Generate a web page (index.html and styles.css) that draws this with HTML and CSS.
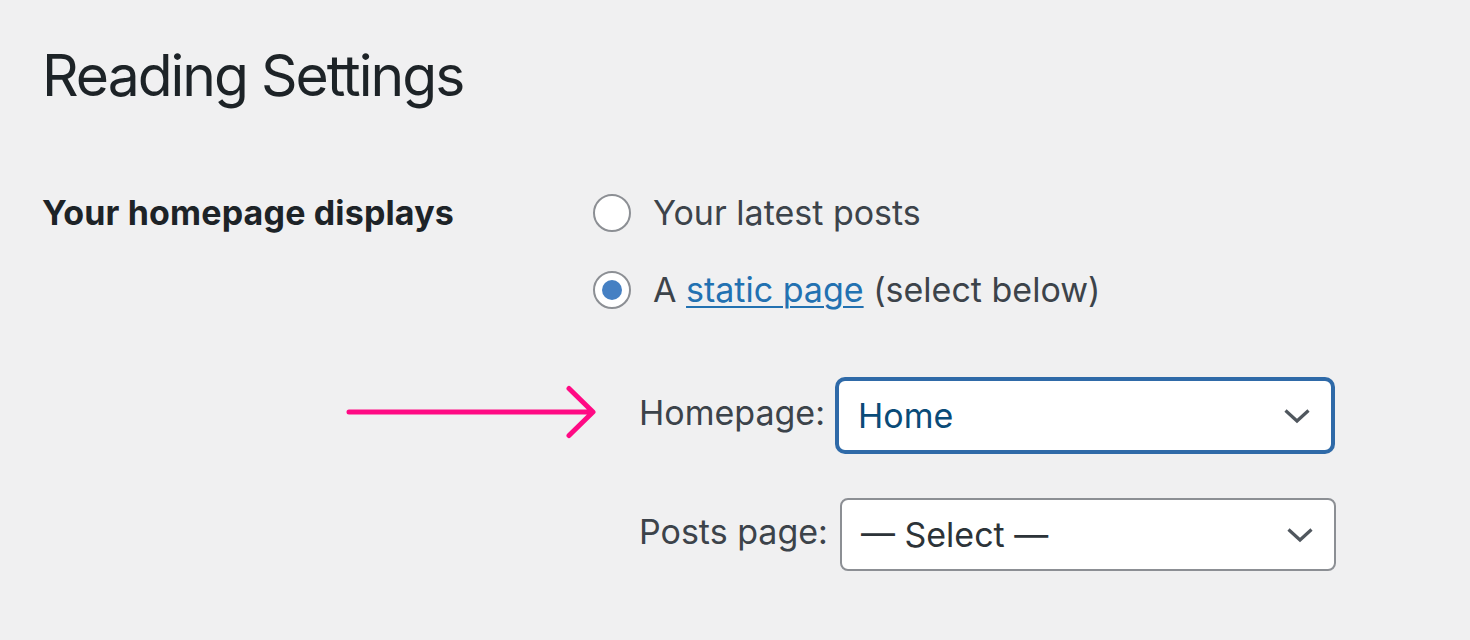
FILE: index.html
```html
<!DOCTYPE html>
<html lang="en">
<head>
<meta charset="utf-8">
<title>Reading Settings</title>
<link rel="stylesheet" href="styles.css">
</head>
<body>
<div class="wrap">
  <h1 class="title">Reading Settings</h1>
  <div class="form-row">
    <div class="th">Your homepage displays</div>
    <div class="td">
      <label class="radio-row">
        <span class="radio"></span>
        <span class="radio-text">Your latest posts</span>
      </label>
      <label class="radio-row">
        <span class="radio checked"></span>
        <span class="radio-text">A <a class="link" href="#">static page</a> (select below)</span>
      </label>
      <div class="pages">
        <div class="select-row">
          <span class="select-label">Homepage:</span>
          <div class="select focused">
            <span class="select-value home">Home</span>
            <svg class="chev" width="28" height="16" viewBox="0 0 28 16"><path d="M2.5 2.5 L14 13 L25.5 2.5" fill="none" stroke="#50575e" stroke-width="3.2"/></svg>
          </div>
        </div>
        <div class="select-row second">
          <span class="select-label">Posts page:</span>
          <div class="select">
            <span class="select-value">— Select —</span>
            <svg class="chev" width="28" height="16" viewBox="0 0 28 16"><path d="M2.5 2.5 L14 13 L25.5 2.5" fill="none" stroke="#50575e" stroke-width="3.2"/></svg>
          </div>
        </div>
      </div>
    </div>
  </div>
  <svg class="arrow" width="260" height="60" viewBox="0 0 260 60"><path d="M3 28 H246 M223 4.5 L247 28 L223 51.5" fill="none" stroke="#ff0a84" stroke-width="5" stroke-linecap="round" stroke-linejoin="round"/></svg>
</div>
</body>
</html>
```

FILE: styles.css
```css
html, body {
  margin: 0;
  padding: 0;
  background: #f0f0f1;
}
body {
  font-family: Inter, "Noto Sans", "Liberation Sans", sans-serif;
  color: #3c434a;
  width: 1470px;
  height: 640px;
  overflow: hidden;
}
.wrap {
  position: relative;
  padding: 47px 0 0 42px;
}
.title {
  margin: 0;
  font-size: 57px;
  line-height: 57px;
  font-weight: 400;
  color: #1d2327;
  letter-spacing: -2px;
}
.form-row {
  display: grid;
  grid-template-columns: 551px 1fr;
  margin-top: 90px;
}
.th {
  font-size: 34px;
  line-height: 38px;
  font-weight: 700;
  color: #1d2327;
  letter-spacing: 0.15px;
}
.td {
  display: flex;
  flex-direction: column;
}
.radio-row {
  display: flex;
  align-items: center;
  gap: 22px;
  height: 38px;
  font-size: 34px;
  line-height: 38px;
  margin-bottom: 39px;
}
.radio-row + .radio-row {
  margin-bottom: 0;
}
.radio {
  width: 38px;
  height: 38px;
  box-sizing: border-box;
  border: 2px solid #8c8f94;
  border-radius: 50%;
  background: #fff;
  display: flex;
  align-items: center;
  justify-content: center;
  flex: none;
}
.radio.checked::after {
  content: "";
  width: 20px;
  height: 20px;
  border-radius: 50%;
  background: #4580c3;
}
.radio-text {
  color: #3c434a;
}
.link {
  color: #2271b1;
  text-decoration: underline;
  text-decoration-thickness: 2px;
  text-underline-offset: 4px;
}
.pages {
  margin-top: 70px;
  margin-left: 46px;
  display: flex;
  flex-direction: column;
  gap: 46px;
}
.select-row {
  display: flex;
  align-items: center;
  gap: 12px;
}
.select-label {
  font-size: 34px;
  line-height: 38px;
  color: #3c434a;
  padding-bottom: 6px;
}
.select {
  width: 496px;
  height: 73px;
  box-sizing: border-box;
  border: 2px solid #8c8f94;
  border-radius: 8px;
  background: #fff;
  display: flex;
  align-items: center;
  justify-content: space-between;
  padding: 0 20px 0 19px;
}
.select.focused {
  border-color: #2f6aa8;
  box-shadow: 0 0 0 2px #2f6aa8;
}
.select-value {
  font-size: 34px;
  line-height: 38px;
  color: #2c3338;
}
.select-value.home {
  color: #0a4b78;
}
.chev {
  display: block;
}
.arrow {
  position: absolute;
  left: 346px;
  top: 384px;
}
```
